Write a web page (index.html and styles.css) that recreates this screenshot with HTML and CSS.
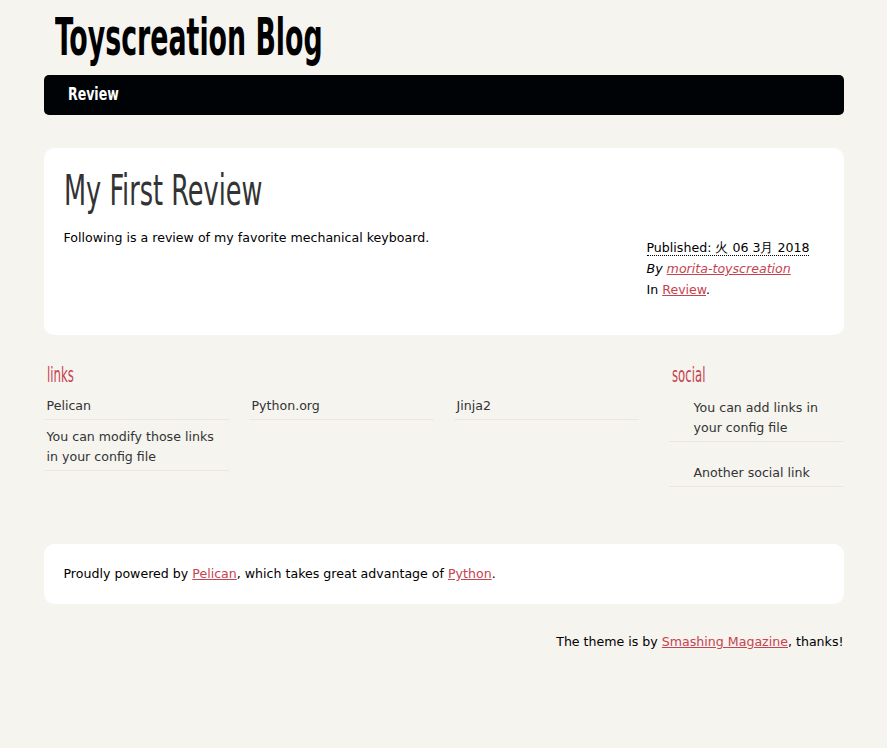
FILE: index.html
```html
<!DOCTYPE html>
<html lang="ja">
<head>
<meta charset="utf-8">
<title>Toyscreation Blog</title>
<link rel="stylesheet" href="styles.css">
</head>
<body>
<header class="banner">
  <h1 class="site-title"><a href="#" class="site-title-link"><span class="squeeze squeeze-title">Toyscreation Blog</span></a></h1>
  <nav class="menu">
    <ul class="menu-list">
      <li class="menu-item"><a href="#" class="menu-link"><span class="squeeze squeeze-menu">Review</span></a></li>
    </ul>
  </nav>
</header>

<section class="content">
  <article class="entry">
    <h1 class="entry-title"><span class="squeeze squeeze-entry">My First Review</span></h1>
    <div class="entry-row">
      <div class="entry-body">
        <p class="entry-text">Following is a review of my favorite mechanical keyboard.</p>
      </div>
      <footer class="post-info">
        <p class="info-line"><abbr class="published" title="2018-03-06">Published: 火 06 3月 2018</abbr></p>
        <address class="info-line vcard">By <a href="#" class="link">morita-toyscreation</a></address>
        <p class="info-line">In <a href="#" class="link">Review</a>.</p>
      </footer>
    </div>
  </article>
</section>

<section class="extras">
  <div class="blogroll">
    <h2 class="extras-title"><span class="squeeze">links</span></h2>
    <ul class="blogroll-list">
      <li class="blogroll-item">Pelican</li>
      <li class="blogroll-item">Python.org</li>
      <li class="blogroll-item">Jinja2</li>
      <li class="blogroll-item">You can modify those links in your config file</li>
    </ul>
  </div>
  <div class="social">
    <h2 class="extras-title"><span class="squeeze">social</span></h2>
    <ul class="social-list">
      <li class="social-item">You can add links in your config file</li>
      <li class="social-item">Another social link</li>
    </ul>
  </div>
</section>

<footer class="contentinfo">
  <address class="powered">Proudly powered by <a href="#" class="link">Pelican</a>, which takes great advantage of <a href="#" class="link">Python</a>.</address>
</footer>
<p class="credit">The theme is by <a href="#" class="link">Smashing Magazine</a>, thanks!</p>
</body>
</html>
```

FILE: styles.css
```css
html, body {
  margin: 0;
  padding: 0;
}
body {
  background: #F5F4EF;
  color: #000;
  font-family: "DejaVu Sans", sans-serif;
  font-size: 12.6px;
  line-height: 20px;
}
.squeeze {
  display: inline-block;
  transform: scaleX(0.62);
  transform-origin: left center;
  white-space: nowrap;
}
.squeeze-title {
  transform: scaleX(0.573);
}
.squeeze-entry {
  transform: scaleX(0.678);
}
.squeeze-menu {
  transform: scaleX(0.82);
}
.link {
  color: #C74350;
  text-decoration: underline;
}

/* banner */
.banner {
  width: 800px;
  margin: 0 auto;
}
.site-title {
  margin: 0;
  height: 75px;
  box-sizing: border-box;
  padding: 11px 0 0 11px;
  font-family: "DejaVu Sans", sans-serif;
  font-stretch: condensed;
  font-size: 52px;
  line-height: 52px;
  font-weight: bold;
}
.site-title-link {
  color: #000;
  text-decoration: none;
}
.menu {
  height: 40px;
  background: #000305;
  border-radius: 5px;
}
.menu-list {
  list-style: none;
  margin: 0;
  padding: 0;
  display: flex;
}
.menu-link {
  display: block;
  padding: 0 0 0 24px;
  color: #fff;
  text-decoration: none;
  font-family: "DejaVu Sans", sans-serif;
  font-stretch: condensed;
  font-weight: bold;
  font-size: 17px;
  line-height: 39px;
}

/* content */
.content {
  width: 760px;
  margin: 33px auto 0;
  padding: 20px;
  background: #fff;
  border-radius: 10px;
}
.entry-title {
  margin: 0 0 14px;
  font-family: "DejaVu Sans", sans-serif;
  font-stretch: condensed;
  font-weight: normal;
  font-size: 42px;
  line-height: 46px;
  color: #333;
}
.entry-row {
  display: flex;
  align-items: flex-start;
}
.entry-body {
  flex: 1;
}
.entry-text {
  margin: 0;
}
.post-info {
  width: 177px;
  margin: 10px 0 14px;
}
.info-line {
  margin: 0 0 1px;
  font-style: normal;
}
.vcard {
  font-style: italic;
}
.published {
  text-decoration: none;
  border-bottom: 1px dotted #000;
}

/* extras */
.extras {
  width: 800px;
  margin: 26px auto 0;
  display: flex;
  justify-content: space-between;
  align-items: flex-start;
}
.blogroll {
  width: 615px;
}
.social {
  width: 175px;
}
.extras-title {
  margin: 0;
  padding-left: 3px;
  color: #C74350;
  font-family: "DejaVu Sans", sans-serif;
  font-stretch: condensed;
  font-weight: normal;
  font-size: 21px;
  line-height: 28px;
}
.blogroll-list {
  list-style: none;
  margin: 0;
  padding: 0;
  display: flex;
  flex-wrap: wrap;
}
.blogroll-item {
  width: 182px;
  margin-right: 20px;
  padding: 7px 0 3px 3px;
  border-bottom: 1px solid #F1E4E4;
  color: #333;
}
.social-list {
  list-style: none;
  margin: 0;
  padding: 2px 0 0;
}
.social-item {
  padding: 7px 0 3px 25px;
  border-bottom: 1px solid #F1E4E4;
  color: #333;
}
.social-item + .social-item {
  margin-top: 14px;
}

/* footer */
.contentinfo {
  width: 760px;
  margin: 57px auto 0;
  padding: 20px;
  background: #fff;
  border-radius: 10px;
}
.powered {
  font-style: normal;
}
.credit {
  width: 800px;
  margin: 28px auto 0;
  text-align: right;
}
```
